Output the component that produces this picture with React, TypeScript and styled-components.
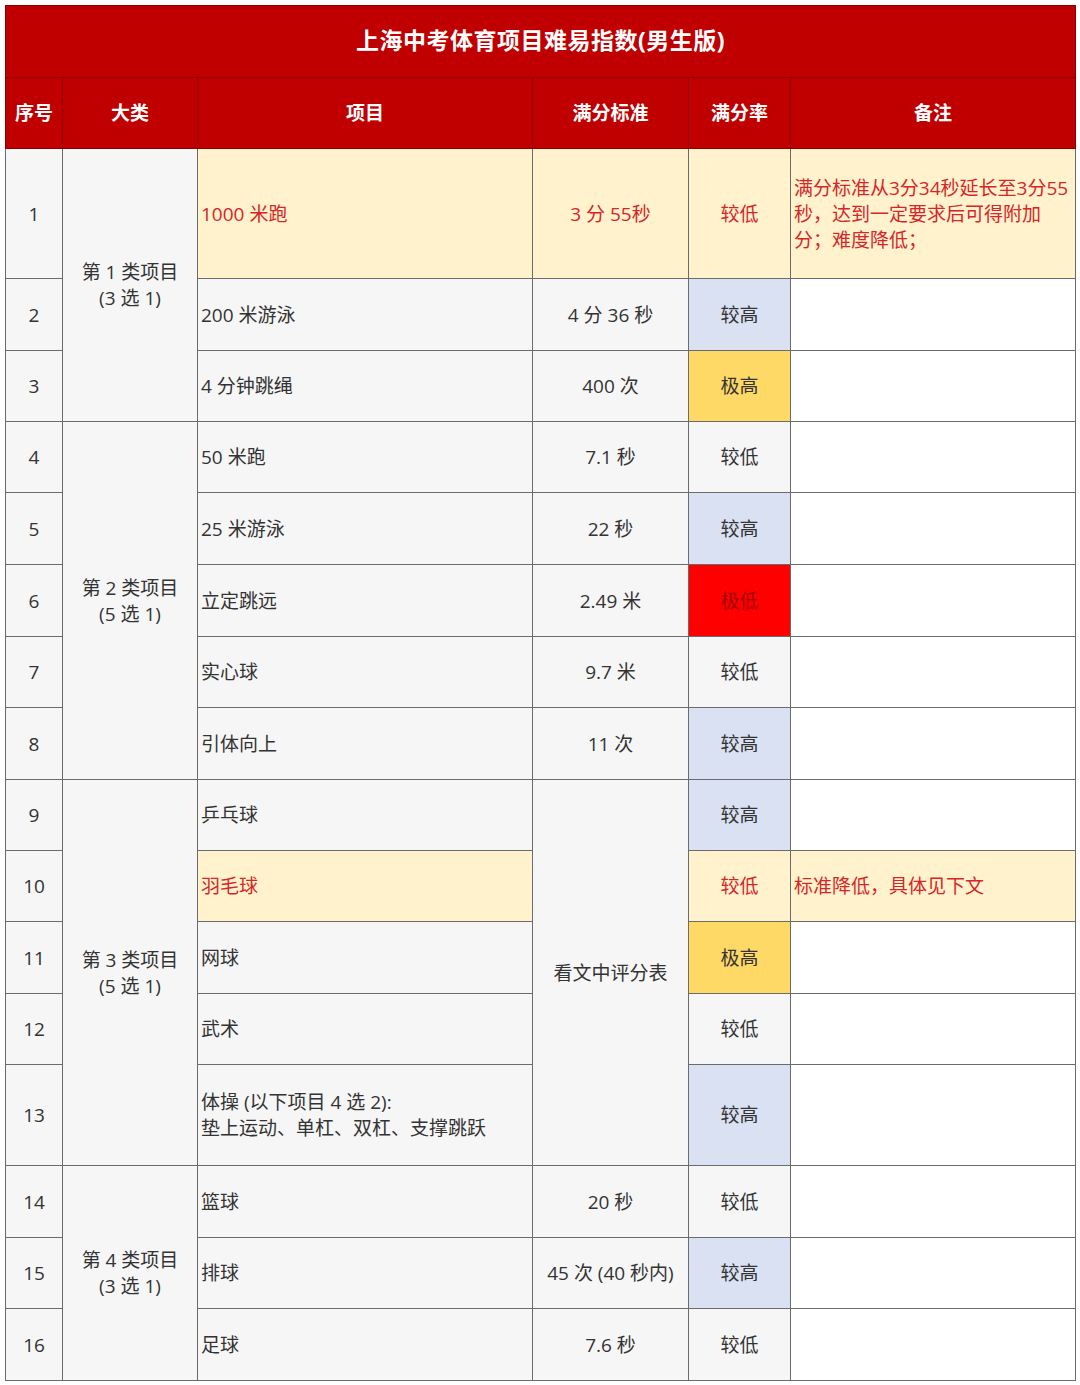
import React from 'react';
import styled, { createGlobalStyle, css } from 'styled-components';

type Tone = 'gray' | 'white' | 'yellow' | 'blue' | 'gold' | 'red';

interface Row {
  no: number;
  height: number;
  name: React.ReactNode;
  standard?: string;
  rate: string;
  rateTone: Tone;
  note?: React.ReactNode;
  highlight?: boolean;
}

interface Group {
  label: string;
  pick: string;
  rows: Row[];
}

const groups: Group[] = [
  {
    label: '第 1 类项目',
    pick: '(3 选 1)',
    rows: [
      {
        no: 1,
        height: 130,
        name: '1000 米跑',
        standard: '3 分 55秒',
        rate: '较低',
        rateTone: 'yellow',
        highlight: true,
        note: (
          <>
            满分标准从3分34秒延长至3分55
            <br />
            秒，达到一定要求后可得附加
            <br />
            分；难度降低；
          </>
        ),
      },
      { no: 2, height: 72, name: '200 米游泳', standard: '4 分 36 秒', rate: '较高', rateTone: 'blue' },
      { no: 3, height: 71, name: '4 分钟跳绳', standard: '400 次', rate: '极高', rateTone: 'gold' },
    ],
  },
  {
    label: '第 2 类项目',
    pick: '(5 选 1)',
    rows: [
      { no: 4, height: 71, name: '50 米跑', standard: '7.1 秒', rate: '较低', rateTone: 'gray' },
      { no: 5, height: 72, name: '25 米游泳', standard: '22 秒', rate: '较高', rateTone: 'blue' },
      { no: 6, height: 72, name: '立定跳远', standard: '2.49 米', rate: '极低', rateTone: 'red' },
      { no: 7, height: 71, name: '实心球', standard: '9.7 米', rate: '较低', rateTone: 'gray' },
      { no: 8, height: 72, name: '引体向上', standard: '11 次', rate: '较高', rateTone: 'blue' },
    ],
  },
  {
    label: '第 3 类项目',
    pick: '(5 选 1)',
    rows: [
      { no: 9, height: 71, name: '乒乓球', standard: '看文中评分表', rate: '较高', rateTone: 'blue' },
      {
        no: 10,
        height: 71,
        name: '羽毛球',
        rate: '较低',
        rateTone: 'yellow',
        highlight: true,
        note: '标准降低，具体见下文',
      },
      { no: 11, height: 72, name: '网球', rate: '极高', rateTone: 'gold' },
      { no: 12, height: 71, name: '武术', rate: '较低', rateTone: 'gray' },
      {
        no: 13,
        height: 101,
        name: (
          <>
            体操 (以下项目 4 选 2):
            <br />
            垫上运动、单杠、双杠、支撑跳跃
          </>
        ),
        rate: '较高',
        rateTone: 'blue',
      },
    ],
  },
  {
    label: '第 4 类项目',
    pick: '(3 选 1)',
    rows: [
      { no: 14, height: 72, name: '篮球', standard: '20 秒', rate: '较低', rateTone: 'gray' },
      { no: 15, height: 71, name: '排球', standard: '45 次 (40 秒内)', rate: '较高', rateTone: 'blue' },
      { no: 16, height: 72, name: '足球', standard: '7.6 秒', rate: '较低', rateTone: 'gray' },
    ],
  },
];

const toneColors: Record<Tone, string> = {
  gray: '#f6f6f6',
  white: '#ffffff',
  yellow: '#fff2cc',
  blue: '#d9e1f2',
  gold: '#ffd966',
  red: '#ff0000',
};

export default function App() {
  return (
    <>
      <GlobalStyle />
      <Page>
        <Table>
          <colgroup>
            <col style={{ width: 57 }} />
            <col style={{ width: 135 }} />
            <col style={{ width: 335 }} />
            <col style={{ width: 156 }} />
            <col style={{ width: 102 }} />
            <col style={{ width: 285 }} />
          </colgroup>
          <thead>
            <tr>
              <TitleCell colSpan={6}>上海中考体育项目难易指数(男生版)</TitleCell>
            </tr>
            <HeadRow>
              <HeadCell>序号</HeadCell>
              <HeadCell>大类</HeadCell>
              <HeadCell>项目</HeadCell>
              <HeadCell>满分标准</HeadCell>
              <HeadCell>满分率</HeadCell>
              <HeadCell>备注</HeadCell>
            </HeadRow>
          </thead>
          <tbody>
            {groups.map((group, gi) =>
              group.rows.map((row, ri) => (
                <tr key={row.no} style={{ height: row.height }}>
                  <Cell $tone="gray">{row.no}</Cell>
                  {ri === 0 && (
                    <Cell $tone="gray" rowSpan={group.rows.length}>
                      <GroupLabel>
                        <span>{group.label}</span>
                        <span>{group.pick}</span>
                      </GroupLabel>
                    </Cell>
                  )}
                  <Cell $tone={row.highlight ? 'yellow' : 'gray'} $accent={row.highlight} $left>
                    {row.name}
                  </Cell>
                  {row.standard !== undefined && (
                    <Cell
                      $tone={row.highlight ? 'yellow' : 'gray'}
                      $accent={row.highlight}
                      rowSpan={gi === 2 ? group.rows.length : 1}
                    >
                      {row.standard}
                    </Cell>
                  )}
                  <Cell $tone={row.rateTone} $accent={row.highlight} $dim={row.rateTone === 'red'}>
                    {row.rate}
                  </Cell>
                  <Cell $tone={row.highlight ? 'yellow' : 'white'} $accent={row.highlight} $left $note>
                    {row.note}
                  </Cell>
                </tr>
              ))
            )}
          </tbody>
        </Table>
      </Page>
    </>
  );
}

const GlobalStyle = createGlobalStyle`
  html, body {
    margin: 0;
    padding: 0;
    background: #ffffff;
  }

  body {
    font-family: "Open Sans", "Noto Sans CJK SC", sans-serif;
    color: #333333;
  }
`;

const Page = styled.div`
  padding: 5px;
  width: 1070px;
`;

const Table = styled.table`
  width: 1070px;
  border-collapse: collapse;
  table-layout: fixed;
  font-size: 19px;
`;

const TitleCell = styled.th`
  height: 66px;
  padding: 0 0 5px;
  background: #c00000;
  color: #ffffff;
  font-size: 23px;
  font-weight: 700;
  text-align: center;
  border: 1px solid #8a0000;
  letter-spacing: 0.5px;
`;

const HeadRow = styled.tr`
  height: 71px;
`;

const HeadCell = styled.th`
  padding: 0 0 2px;
  background: #c00000;
  color: #ffffff;
  font-size: 19px;
  font-weight: 700;
  text-align: center;
  border: 1px solid #8a0000;
`;

const Cell = styled.td<{ $tone: Tone; $accent?: boolean; $left?: boolean; $note?: boolean; $dim?: boolean }>`
  padding: 0 3px;
  background: ${({ $tone }) => toneColors[$tone]};
  color: ${({ $accent }) => ($accent ? '#d5262a' : '#333333')};
  text-align: ${({ $left }) => ($left ? 'left' : 'center')};
  vertical-align: middle;
  border: 1px solid #6b6b6b;
  line-height: 26px;
  white-space: nowrap;

  ${({ $note }) =>
    $note &&
    css`
      padding: 0 0 0 3px;
    `}

  ${({ $dim }) =>
    $dim &&
    css`
      color: #a50000;
    `}
`;

const GroupLabel = styled.div`
  display: flex;
  flex-direction: column;
  align-items: center;
  line-height: 26px;
`;
